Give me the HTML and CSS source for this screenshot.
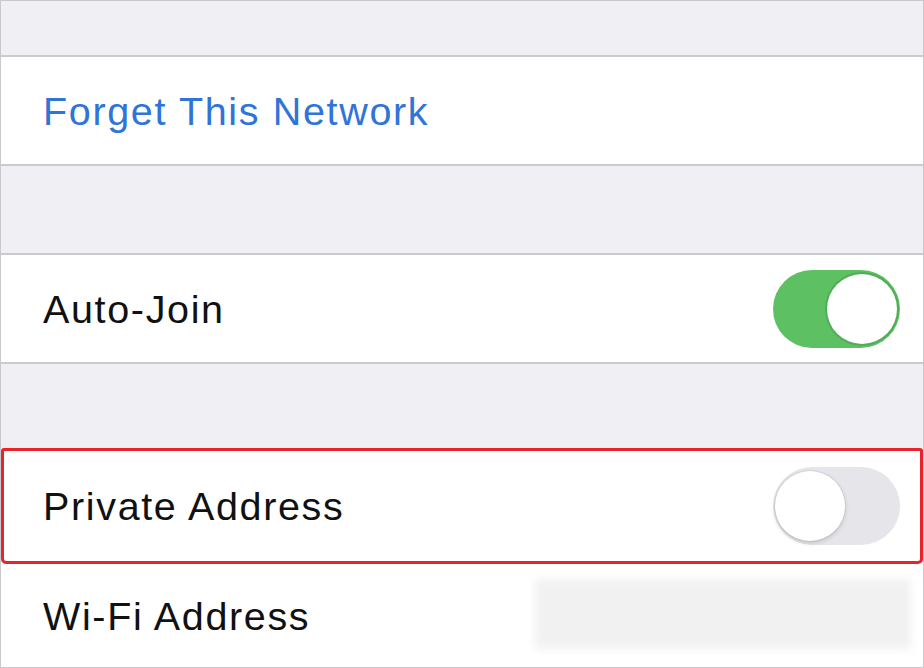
FILE: index.html
```html
<!DOCTYPE html>
<html lang="en">
<head>
<meta charset="utf-8">
<title>Wi-Fi Settings</title>
<link rel="stylesheet" href="styles.css">
</head>
<body>
<div class="screen">
  <div class="gap gap-top"></div>
  <div class="row">
    <span class="label link">Forget This Network</span>
  </div>
  <div class="gap gap-mid"></div>
  <div class="row">
    <span class="label">Auto-Join</span>
    <span class="toggle on"><span class="knob"></span></span>
  </div>
  <div class="gap gap-low"></div>
  <div class="row highlight">
    <span class="label">Private Address</span>
    <span class="toggle off"><span class="knob"></span></span>
  </div>
  <div class="row last">
    <span class="label">Wi-Fi Address</span>
    <span class="redacted"></span>
  </div>
</div>
</body>
</html>
```

FILE: styles.css
```css
html, body {
  margin: 0;
  padding: 0;
  background: #ffffff;
}

.screen {
  width: 924px;
  height: 668px;
  box-sizing: border-box;
  border: 1px solid #c9c9cd;
  display: flex;
  flex-direction: column;
  font-family: "Liberation Sans", Arial, sans-serif;
  overflow: hidden;
}

.gap {
  background: #efeff4;
  flex: none;
}
.gap-top { height: 54px; border-bottom: 2px solid #cacacf; }
.gap-mid { height: 87px; border-top: 2px solid #cacacf; border-bottom: 2px solid #cacacf; }
.gap-low { height: 84px; border-top: 2px solid #cacacf; }

.row {
  flex: none;
  height: 107px;
  background: #ffffff;
  display: flex;
  align-items: center;
  padding: 0 23px 0 42px;
  box-sizing: border-box;
}

.row.highlight {
  height: 116px;
  border: 3px solid #e8232b;
  border-radius: 3px 3px 5px 5px;
  padding: 0 20px 0 39px;
}

.row.last {
  flex: 1;
  padding-right: 12px;
}

.label {
  font-size: 39.5px;
  letter-spacing: 1.65px;
  color: #111111;
  line-height: 1;
  margin-top: 2px;
}

.label.link {
  color: #2f74d8;
}

.toggle {
  margin-left: auto;
  width: 127px;
  height: 78px;
  border-radius: 39px;
  box-sizing: border-box;
  display: flex;
  align-items: center;
  padding: 0 3px;
}

.toggle.on {
  background: #5dc063;
  justify-content: flex-end;
}

.toggle.off {
  background: #e6e6ea;
  justify-content: flex-start;
  padding: 0 2px;
}

.knob {
  width: 70px;
  height: 70px;
  border-radius: 50%;
  background: #ffffff;
}

.toggle.on .knob {
  box-shadow: 0 0 0 2px #4fad56;
}

.toggle.off .knob {
  box-shadow: 0 2px 5px rgba(0, 0, 0, 0.16), 0 0 0 1px rgba(0, 0, 0, 0.06);
}

.redacted {
  margin-left: auto;
  margin-top: -4px;
  width: 376px;
  height: 70px;
  background: #f1f1f1;
  filter: blur(4px);
}
```
